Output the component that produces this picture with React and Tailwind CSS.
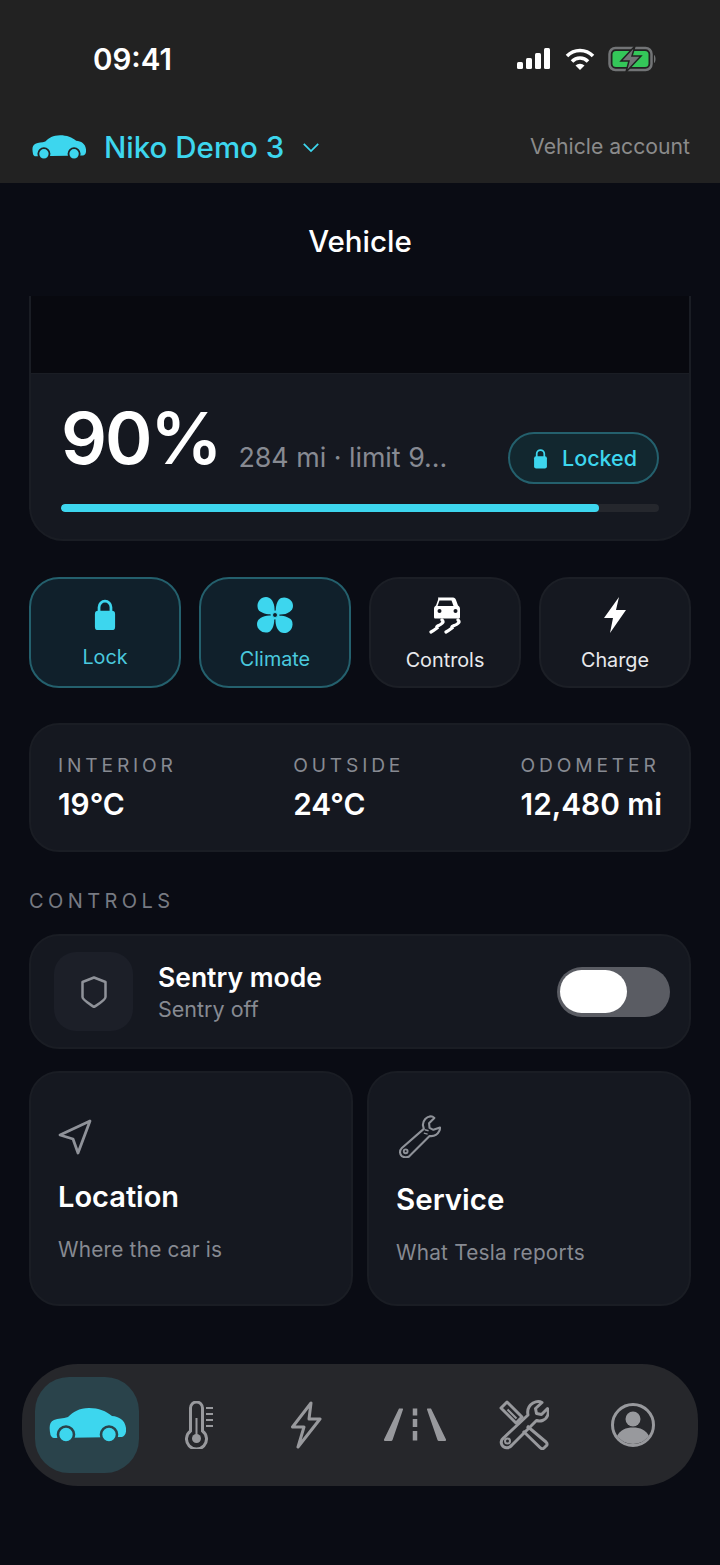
import React from "react";

const CYAN = "#3dd6ee";

function Car({ className, color = CYAN, cut = "#222222" }) {
  return (
    <svg viewBox="0 0 77 35" className={className}>
      <path
        fill={color}
        d="M1.500 27C0 20 0 14 5 12C9 10.500 14 10.500 19 9C24 4 30 0 40 0C50 0 57 3 63 8C70 8.500 76 12 77 20C77.500 25 76 28 73 29L5 30C3.500 30 2.500 29 1.500 27Z"
      />
      <circle cx="17" cy="26.500" r="8" fill={color} stroke={cut} strokeWidth="2.600" />
      <circle cx="60" cy="26.500" r="8" fill={color} stroke={cut} strokeWidth="2.600" />
    </svg>
  );
}

function Lock({ className, color = CYAN }) {
  return (
    <svg viewBox="0 0 24 36" className={className}>
      <path d="M5.500 16V10a6.500 6.500 0 0 1 13 0v6" fill="none" stroke={color} strokeWidth="3" />
      <rect x="1" y="14" width="22" height="21" rx="3.500" fill={color} />
    </svg>
  );
}

function Fan({ className }) {
  const petal = "M17 17C10 18 3 16 1 12C-1 6 3 0 9 0C15 0 19 8 17 17Z";
  return (
    <svg viewBox="0 0 36 36" className={className}>
      <g fill={CYAN}>
        <path d={petal} />
        <path d={petal} transform="rotate(90 18 18)" />
        <path d={petal} transform="rotate(180 18 18)" />
        <path d={petal} transform="rotate(270 18 18)" />
        <circle cx="18" cy="18" r="4.500" />
      </g>
      <circle cx="18" cy="18" r="2.500" fill="#10202b" stroke={CYAN} strokeWidth="1" />
    </svg>
  );
}

function Skid({ className }) {
  return (
    <svg viewBox="0 0 33 37" className={className}>
      <path
        fill="#fff"
        d="M9 .5h15c1.500 0 2.500 1 3 2.500l2 5.500c1.500 1 2 2 2 3.500v8c0 1-.5 1.500-1.500 1.500h-23C5.500 21.500 5 21 5 20v-8c0-1.500.5-2.500 2-3.500L9 3c.5-1.500 0-2.500 0-2.500Z"
      />
      <path fill="#151820" d="M10.500 3.500h12l2 5.500h-16Z" />
      <circle cx="10.500" cy="14" r="2" fill="#151820" />
      <circle cx="26.500" cy="14" r="2" fill="#151820" />
      <path
        d="M13 23c2 2 1 3-1.500 4.500S7 29 8 31c-2 1.500-4 3-6 4M29 23c2 2 1 3-1.500 4.500S22 29 23 31c-2 1.500-4 3-6 4"
        fill="none"
        stroke="#fff"
        strokeWidth="3.200"
        strokeLinecap="round"
      />
    </svg>
  );
}

function NavIcons() {
  const g = "#98999d";
  return (
    <>
      <div className="w-[108px] shrink-0 flex justify-center">
        <svg viewBox="0 0 30 48" className="w-[30px] h-[48px]">
          <path
            d="M5.500 30V7a6 6 0 0 1 12 0v23a10 10 0 1 1-12 0Z"
            fill="none"
            stroke={g}
            strokeWidth="3"
          />
          <circle cx="11.500" cy="37.500" r="4.500" fill={g} />
          <path d="M11.500 37V17" stroke={g} strokeWidth="2" />
          <path d="M21 7h7M21 13h7M21 19h7M21 25h7" stroke={g} strokeWidth="2.200" />
        </svg>
      </div>
      <div className="w-[108px] shrink-0 flex justify-center pr-[5px]">
        <svg viewBox="0 0 32 50" className="w-[32px] h-[50px]">
          <path
            d="M21 3 2.500 27H14L8 47l22-28H19Z"
            fill="none"
            stroke={g}
            strokeWidth="3"
            strokeLinejoin="round"
          />
        </svg>
      </div>
      <div className="w-[108px] shrink-0 flex justify-center pr-[2px]">
        <svg viewBox="0 0 62 34" className="w-[62px] h-[34px]">
          <path
            d="M15 .5h3.500a.8.8 0 0 1 .5 1L8.500 32a1.500 1.500 0 0 1-1.500 1H1a1 1 0 0 1-1-1.500ZM43.500 .5H47L62 31.500A1 1 0 0 1 61 33H55a1.500 1.500 0 0 1-1.500-1L43 1.500a.8.8 0 0 1 .5-1Z"
            fill={g}
          />
          <path d="M31 .5v7M31 11v8M31 23v9.500" stroke={g} strokeWidth="4.500" />
        </svg>
      </div>
      <div className="w-[108px] shrink-0 flex justify-center">
        <svg viewBox="0 0 50 50" className="w-[50px] h-[50px]">
          <g fill="none" stroke={g} strokeWidth="3" strokeLinejoin="round">
            <path d="M2 8 8 2l15 15-6 6Z" />
            <path d="M28 26 47 42c1.500 1.500 1.500 3 0 4l-2 2c-1 1-2.500 1-4-.5L24 31" />
            <path d="M8.500 9.500l9 9M12 6l9 9" strokeWidth="2" />
            <path d="M43 2.500l-6.500 6 1 5 5 1 6-6c2 4.500 0 10-5 12-2 .8-4 .8-6 0L13 45c-3 4-8 3.500-10 0-1.500-3-.5-5.500 1.500-7L29 15c-1-5 1-9.500 5-12 3-1.500 6-2 9-.5Z" />
          </g>
          <circle cx="8.500" cy="41" r="2.500" fill="none" stroke={g} strokeWidth="2" />
        </svg>
      </div>
      <div className="w-[108px] shrink-0 flex justify-center pl-[2px]">
        <svg viewBox="0 0 44 44" className="w-[44px] h-[44px]">
          <circle cx="22" cy="22" r="20.500" fill="none" stroke={g} strokeWidth="3" />
          <circle cx="22" cy="16" r="7.500" fill={g} />
          <path d="M6 33c3-6 9-8.500 16-8.500S35 27 38 33c-4 5-10 8-16 8S10 38 6 33Z" fill={g} />
        </svg>
      </div>
    </>
  );
}

function Action({ active, label, icon, pt, gap }) {
  return (
    <div
      className={`flex-1 h-[111px] rounded-[30px] border-2 flex flex-col items-center ${
        active ? "bg-[#10202b] border-[#24606d]" : "bg-[#151820] border-[#1c1f26]"
      }`}
      style={{ paddingTop: pt }}
    >
      <div className="h-[38px] flex items-center justify-center">{icon}</div>
      <div
        className={`text-[19.800px] leading-[26px] ${active ? "text-[#4ac9de]" : "text-[#e8e9ec]"}`}
        style={{ marginTop: gap }}
      >
        {label}
      </div>
    </div>
  );
}

function Stat({ label, value }) {
  return (
    <div>
      <div className="text-[19.200px] leading-[24px] tracking-[0.2em] text-[#878a92]">{label}</div>
      <div className="text-[29.800px] leading-[36px] font-semibold text-white mt-[9px]">{value}</div>
    </div>
  );
}

export default function App() {
  return (
    <div
      className="w-[720px] h-[1565px] bg-[#0a0c14] overflow-hidden"
      style={{ fontFamily: "Inter, 'Noto Sans', sans-serif" }}
    >
      <header className="h-[183px] bg-[#222222] px-[32px]">
        <div className="flex items-center justify-between h-[58px] pt-[30px] box-content pl-[61px] pr-[30px]">
          <span className="text-[29.500px] font-semibold text-white">09:41</span>
          <div className="flex items-center gap-[13px]">
            <svg viewBox="0 0 36 24" className="w-[36px] h-[24px]">
              <g fill="#fff">
                <rect x="1" y="15" width="6" height="7" rx="1.500" />
                <rect x="10" y="11" width="6" height="11" rx="1.500" />
                <rect x="19" y="6" width="6" height="16" rx="1.500" />
                <rect x="28" y="1" width="6" height="21" rx="1.500" />
              </g>
            </svg>
            <svg viewBox="0 0 30 24" className="w-[30px] h-[24px]">
              <path d="M2 9a18 18 0 0 1 26 0" fill="none" stroke="#fff" strokeWidth="3.500" />
              <path d="M7 14.500a11 11 0 0 1 16 0" fill="none" stroke="#fff" strokeWidth="3.500" />
              <path d="M15 23 10.500 18.500a6.500 6.500 0 0 1 9 0Z" fill="#fff" />
            </svg>
            <svg viewBox="0 0 50 26" className="w-[50px] h-[26px]">
              <rect x="1.500" y="2" width="42" height="22" rx="6" fill="none" stroke="#727476" strokeWidth="2.500" />
              <rect x="4.500" y="5" width="36" height="16" rx="3.500" fill="#34c759" />
              <path d="M46 9c2 1 2 7 0 8Z" fill="#727476" />
              <path d="M27 0 13 15h8l-3 11 15-16h-9Z" fill="#727476" stroke="#222" strokeWidth="1.500" />
            </svg>
          </div>
        </div>
        <div className="flex items-center justify-between mt-[41px]">
          <div className="flex items-center">
            <Car className="w-[54px] h-[25px]" />
            <span className="text-[29.500px] leading-[36px] font-medium text-[#3dd6ee] ml-[18px]">Niko Demo 3</span>
            <svg viewBox="0 0 20 12" className="w-[18px] h-[11px] ml-[18px]">
              <path d="M2 2l8 8 8-8" fill="none" stroke={CYAN} strokeWidth="2" />
            </svg>
          </div>
          <span className="text-[21.200px] text-[#8b8b8b] mr-[-2px]">Vehicle account</span>
        </div>
      </header>

      <div className="text-center text-[29.500px] leading-[36px] font-medium text-white mt-[40px]">Vehicle</div>

      <main className="px-[29px] mt-[37px]">
        <section className="h-[245px] rounded-b-[34px] border-x-2 border-b-2 border-[#1a1d24] bg-[#151820] overflow-hidden">
          <div className="h-[78px] bg-[#08090f] border-b border-[#1a1d24]" />
          <div className="pl-[30px] pr-[30px] pt-[25px]">
            <div className="flex items-end h-[84px]">
              <span className="text-[72px] leading-[84px] font-semibold tracking-[-0.03em] text-white mb-[3px]">90%</span>
              <span className="text-[26.800px] leading-[32px] text-[#878a92] ml-[18px] mb-[10px] w-[212px] truncate">
                284 mi · limit 9...
              </span>
              <span className="ml-auto mb-[-1px] w-[151px] h-[52px] rounded-full border-2 border-[#24606d] bg-[#12272f] flex items-center justify-center gap-[14px] pl-[3px] text-[21.500px] font-medium text-[#3dd6ee]">
                <Lock className="w-[15px] h-[21px]" />
                Locked
              </span>
            </div>
            <div className="h-[8px] rounded-full bg-[#25272d] mt-[21px] overflow-hidden">
              <div className="h-full w-[90%] rounded-full bg-[#3dd6ee]" />
            </div>
          </div>
        </section>

        <section className="flex gap-[18px] mt-[36px]">
          <Action active label="Lock" pt={16} gap={11} icon={<Lock className="w-[24px] h-[33px]" />} />
          <Action active label="Climate" pt={17} gap={12} icon={<Fan className="w-[36px] h-[36px]" />} />
          <Action label="Controls" pt={17} gap={13} icon={<Skid className="w-[33px] h-[37px]" />} />
          <Action
            label="Charge"
            pt={17}
            gap={13}
            icon={
              <svg viewBox="0 0 24 36" className="w-[24px] h-[36px]">
                <path d="M16 0 1 21h9L7 36l16-23h-10Z" fill="#fff" />
              </svg>
            }
          />
        </section>

        <section className="h-[129px] mt-[35px] rounded-[30px] border-2 border-[#1a1d24] bg-[#151820] flex justify-between pl-[27px] pr-[27px] pt-[28px]">
          <Stat label="INTERIOR" value="19°C" />
          <Stat label="OUTSIDE" value="24°C" />
          <Stat label="ODOMETER" value="12,480 mi" />
        </section>

        <div className="text-[20px] leading-[24px] tracking-[0.22em] text-[#777a82] mt-[37px]">CONTROLS</div>

        <section className="h-[115px] mt-[21px] rounded-[30px] border-2 border-[#1a1d24] bg-[#151820] flex items-center pl-[23px] pr-[19px]">
          <div className="w-[79px] h-[79px] rounded-[22px] bg-[#1c1f28] flex items-center justify-center">
            <svg viewBox="0 0 26 32" className="w-[26px] h-[32px]">
              <path
                d="M13 1.500 24.500 6v15c0 3-7 7-11.500 10C9 28 1.500 24 1.500 21V6Z"
                fill="none"
                stroke="#8f9299"
                strokeWidth="2.500"
                strokeLinejoin="round"
              />
            </svg>
          </div>
          <div className="ml-[25px]">
            <div className="text-[26.500px] leading-[32px] font-semibold text-white">Sentry mode</div>
            <div className="text-[21.500px] leading-[28px] text-[#878a92] mt-[2px]">Sentry off</div>
          </div>
          <div className="ml-auto w-[113px] h-[50px] rounded-full bg-[#5a5c63] pl-[3px] flex items-center">
            <div className="w-[67px] h-[43px] rounded-full bg-white" />
          </div>
        </section>

        <section className="flex gap-[14px] mt-[22px]">
          <div className="flex-1 h-[235px] rounded-[30px] border-2 border-[#1a1d24] bg-[#151820] pl-[27px] pt-[46px]">
            <svg viewBox="0 0 34 36" className="w-[34px] h-[36px] block">
              <path
                d="M32 2 2 16l13 4 5 14Z"
                fill="none"
                stroke="#8f9299"
                strokeWidth="2.800"
                strokeLinejoin="round"
              />
            </svg>
            <div className="text-[29px] leading-[36px] font-semibold text-white mt-[24px]">Location</div>
            <div className="text-[20.800px] leading-[26px] tracking-[0.01em] text-[#878a92] mt-[22px]">Where the car is</div>
          </div>
          <div className="flex-1 h-[235px] rounded-[30px] border-2 border-[#1a1d24] bg-[#151820] pl-[27px] pt-[42px]">
            <svg viewBox="0 0 44 44" className="w-[42px] h-[43px] block ml-[3px]">
              <path
                d="M33 1c-4 0-8 4-8 9l1 4L3 34c-3 3-2 7 0 8.500 3 2 6 1.500 8 0l21-21c4 .5 8-1 10-5 1-1 1-3 1-4l-7 2.500-4-2-.5-5 5.500-5.500c-1.500-1.500-3-2-5-1.500Z"
                fill="none"
                stroke="#8f9299"
                strokeWidth="2.200"
                strokeLinejoin="round"
              />
              <circle cx="7" cy="37.500" r="2" fill="none" stroke="#8f9299" strokeWidth="2" />
              <path d="M27 15l4 1M26 18.500l4 1" stroke="#8f9299" strokeWidth="1.500" />
            </svg>
            <div className="text-[29.500px] leading-[36px] font-semibold text-white mt-[23px]">Service</div>
            <div className="text-[20.800px] leading-[26px] tracking-[0.01em] text-[#878a92] mt-[23px]">What Tesla reports</div>
          </div>
        </section>
      </main>

      <nav className="mx-[22px] mt-[58px] h-[122px] rounded-[56px] bg-[#26272b] flex items-center pl-[13px]">
        <div className="w-[104px] h-[96px] mr-[7px] shrink-0 rounded-[34px] bg-[#2a434b] flex items-center justify-center">
          <Car className="w-[77px] h-[35px]" cut="#2a434b" />
        </div>
        <NavIcons />
      </nav>
    </div>
  );
}
